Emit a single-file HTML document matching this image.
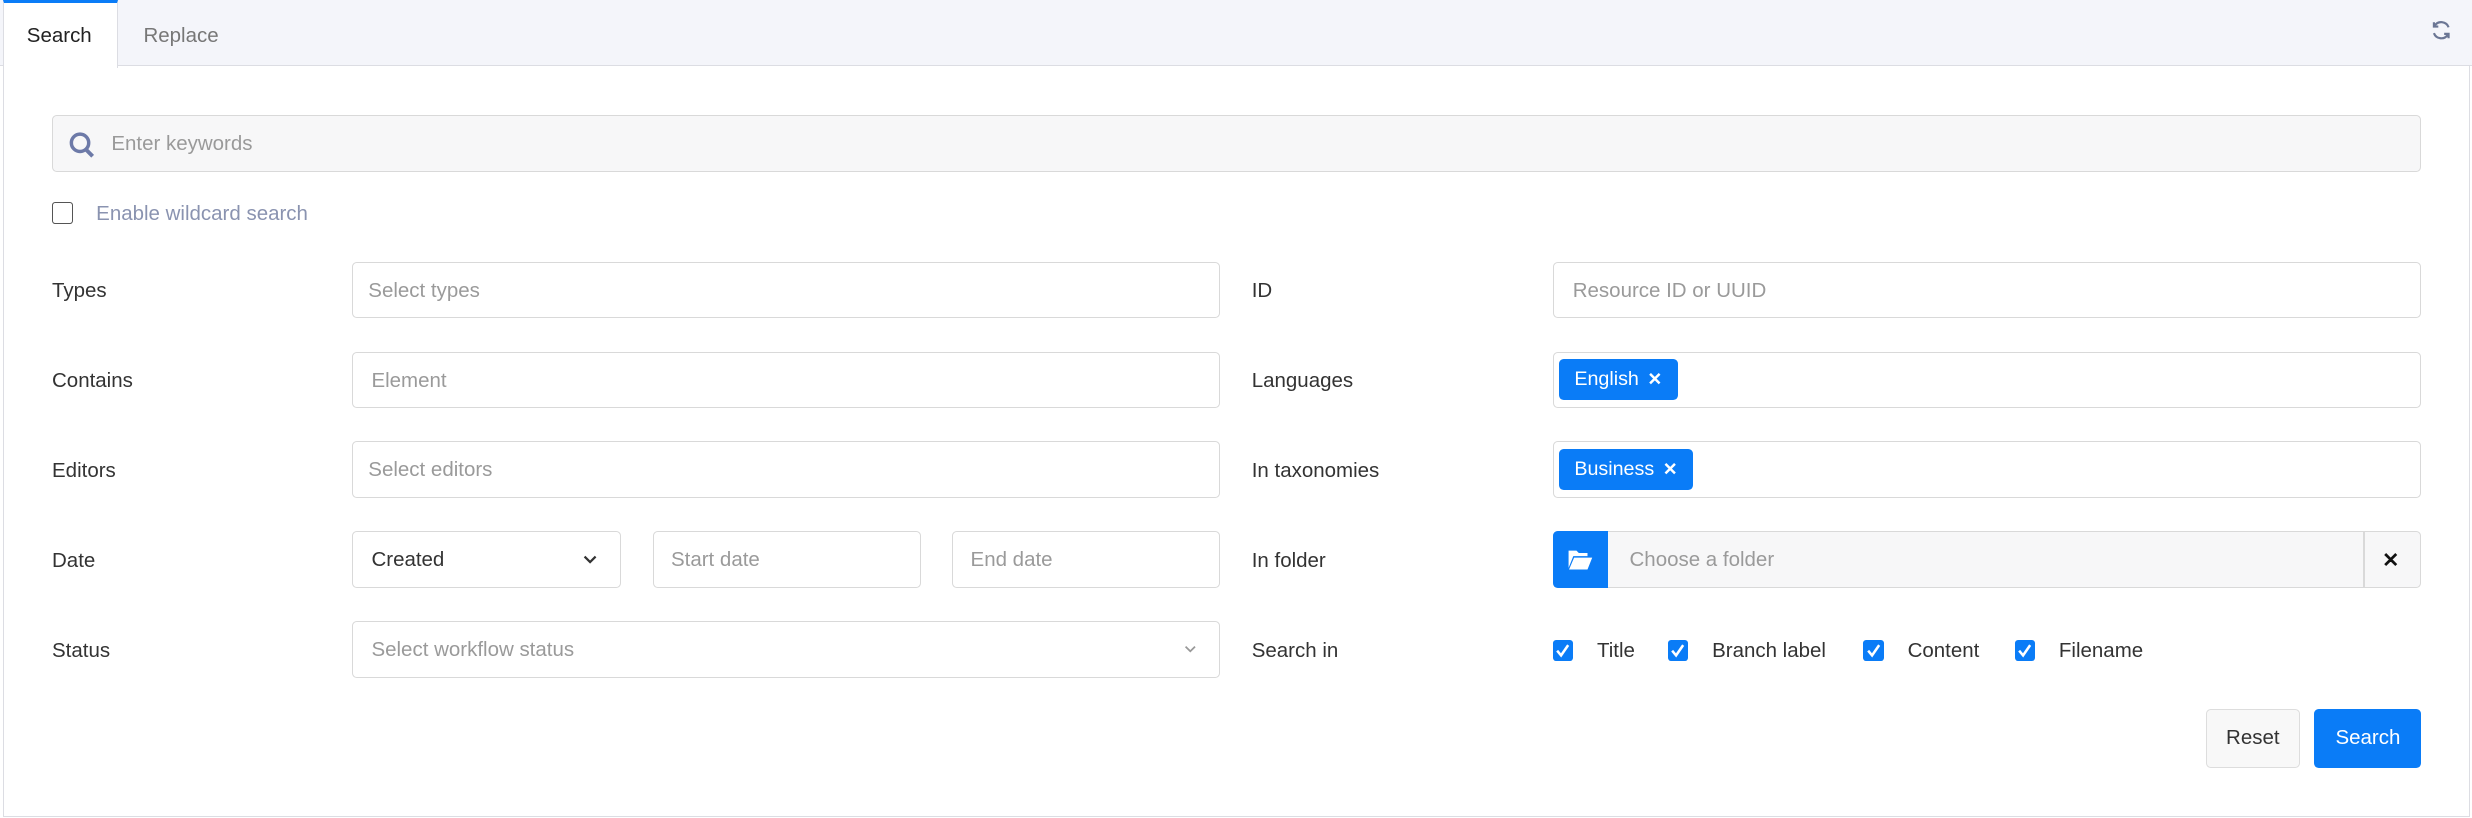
<!DOCTYPE html>
<html><head><style>
html,body{margin:0;padding:0;background:#fff;}
body{width:2472px;height:818px;overflow:hidden;}
#w{zoom:1.5765;width:1568px;height:519px;position:relative;font-family:"Liberation Sans",sans-serif;font-size:13px;color:#333;}
.a{position:absolute;box-sizing:border-box;}
.inp{position:absolute;box-sizing:border-box;height:36px;border:1px solid #d9d9d9;border-radius:3px;background:#fff;color:#9a9a9a;padding-left:11px;line-height:36px;}
.lbl{position:absolute;line-height:22px;}
.tag{position:absolute;background:#0a7cf7;color:#fff;border-radius:3px;height:26px;line-height:26px;padding:0 10px;font-size:12.5px;top:4px;left:3px;}
.tag b{font-size:11px;margin-left:2px}
.cb{position:absolute;width:13px;height:13px;background:#0a7cf7;border-radius:2px;}
.cb svg{position:absolute;left:1px;top:1px}
.ck{position:absolute;line-height:22px;}
</style></head><body><div id="w">
<div class="a" style="left:0;top:0;width:1568px;height:42px;background:#f4f5fa;border-bottom:1px solid #dcdde3"></div>
<div class="a" style="left:2px;top:0;width:73px;height:43px;background:#fff;border-top:2px solid #0a7cf7;border-right:1px solid #dcdde3;border-left:1px solid #dcdde3"></div>
<div class="lbl" style="left:17px;top:12px;color:#222">Search</div>
<div class="lbl" style="left:91px;top:12px;color:#777">Replace</div>
<svg class="a" style="left:1542px;top:13px" width="13" height="13" viewBox="0 0 14 14"><path d="M12 5A5.3 5.3 0 0 0 2.5 4M2 1.5V4.5H5M2 9a5.3 5.3 0 0 0 9.5 1M12 12.5V9.5H9" fill="none" stroke="#6b7694" stroke-width="1.5"/></svg>
<div class="a" style="left:2px;top:42px;width:1565px;height:476px;border:1px solid #dcdde3;border-top:none"></div>
<div class="inp" style="left:33px;top:73px;width:1503px;background:#f7f7f8;padding-left:37px">Enter keywords</div>
<svg class="a" style="left:44px;top:83px" width="17" height="18" viewBox="0 0 17 18"><circle cx="7" cy="7.5" r="5.5" fill="none" stroke="#6d7aa8" stroke-width="2.2"/><path d="M11 12l4 4" stroke="#6d7aa8" stroke-width="2.5"/></svg>
<div class="a" style="left:33px;top:128px;width:13px;height:14px;border:1px solid #555;border-radius:2px"></div>
<div class="lbl" style="left:61px;top:125px;color:#8a93b0">Enable wildcard search</div>

<div class="lbl" style="left:33px;top:174px">Types</div>
<div class="inp" style="left:223px;top:166px;width:551px;padding-left:10px">Select types</div>
<div class="lbl" style="left:794px;top:174px">ID</div>
<div class="inp" style="left:985px;top:166px;width:551px;padding-left:12px">Resource ID or UUID</div>

<div class="lbl" style="left:33px;top:231px">Contains</div>
<div class="inp" style="left:223px;top:223px;width:551px;padding-left:12px">Element</div>
<div class="lbl" style="left:794px;top:231px">Languages</div>
<div class="inp" style="left:985px;top:223px;width:551px"><div class="tag">English <b>✕</b></div></div>

<div class="lbl" style="left:33px;top:288px">Editors</div>
<div class="inp" style="left:223px;top:280px;width:551px;padding-left:10px">Select editors</div>
<div class="lbl" style="left:794px;top:288px">In taxonomies</div>
<div class="inp" style="left:985px;top:280px;width:551px"><div class="tag">Business <b>✕</b></div></div>

<div class="lbl" style="left:33px;top:345px">Date</div>
<div class="inp" style="left:223px;top:337px;width:171px;color:#333;padding-left:12px">Created</div>
<svg class="a" style="left:370px;top:352px" width="9" height="6" viewBox="0 0 9 6"><path d="M1 1l3.5 3.5L8 1" fill="none" stroke="#333" stroke-width="1.4"/></svg>
<div class="inp" style="left:414px;top:337px;width:170px">Start date</div>
<div class="inp" style="left:604px;top:337px;width:170px">End date</div>
<div class="lbl" style="left:794px;top:345px">In folder</div>
<div class="inp" style="left:985px;top:337px;width:551px;background:#f7f7f8;padding-left:48px">Choose a folder</div>
<div class="a" style="left:985px;top:337px;width:35px;height:36px;background:#0a7cf7;border-radius:3px 0 0 3px"></div>
<svg class="a" style="left:994px;top:348px" width="17" height="14" viewBox="0 0 17 14"><path d="M1 1h5l1.5 1.5H13v2H4L1 12z M4.5 5.5H16L13 13H1.3z" fill="#fff"/></svg>
<div class="a" style="left:1499px;top:337px;width:1px;height:36px;background:#d9d9d9"></div>
<div class="lbl" style="left:1511px;top:345px;font-weight:bold;color:#111">✕</div>

<div class="lbl" style="left:33px;top:402px">Status</div>
<div class="inp" style="left:223px;top:394px;width:551px;padding-left:12px">Select workflow status</div>
<svg class="a" style="left:751px;top:409px" width="8" height="5" viewBox="0 0 8 5"><path d="M1 1l3 3 3-3" fill="none" stroke="#999" stroke-width="1.1"/></svg>
<div class="lbl" style="left:794px;top:402px">Search in</div>
<div class="cb" style="left:985px;top:406px"><svg width="11" height="11" viewBox="0 0 11 11"><path d="M2 5.5l2.5 3L9 2" fill="none" stroke="#fff" stroke-width="1.6"/></svg></div>
<div class="ck" style="left:1013px;top:402px">Title</div>
<div class="cb" style="left:1058px;top:406px"><svg width="11" height="11" viewBox="0 0 11 11"><path d="M2 5.5l2.5 3L9 2" fill="none" stroke="#fff" stroke-width="1.6"/></svg></div>
<div class="ck" style="left:1086px;top:402px">Branch label</div>
<div class="cb" style="left:1182px;top:406px"><svg width="11" height="11" viewBox="0 0 11 11"><path d="M2 5.5l2.5 3L9 2" fill="none" stroke="#fff" stroke-width="1.6"/></svg></div>
<div class="ck" style="left:1210px;top:402px">Content</div>
<div class="cb" style="left:1278px;top:406px"><svg width="11" height="11" viewBox="0 0 11 11"><path d="M2 5.5l2.5 3L9 2" fill="none" stroke="#fff" stroke-width="1.6"/></svg></div>
<div class="ck" style="left:1306px;top:402px">Filename</div>

<div class="a" style="left:1399px;top:450px;width:60px;height:37px;border:1px solid #ddd;border-radius:3px;background:#f8f8f8;text-align:center;line-height:36px">Reset</div>
<div class="a" style="left:1468px;top:450px;width:68px;height:37px;background:#0a7cf7;border-radius:3px;color:#fff;text-align:center;line-height:37px">Search</div>
</div></body></html>
